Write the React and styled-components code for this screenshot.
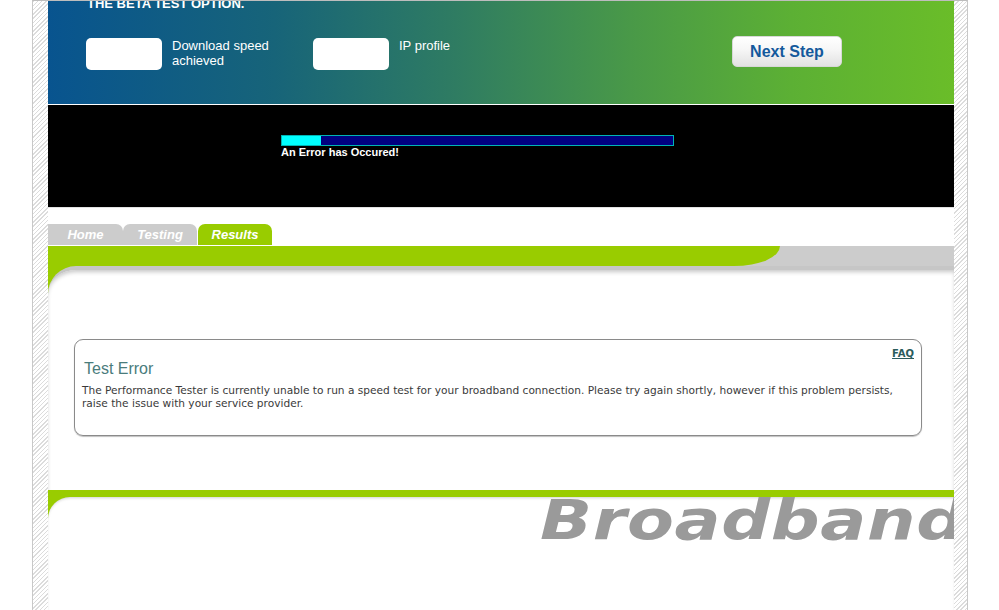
import React from 'react';
import styled, { createGlobalStyle } from 'styled-components';

const GlobalStyle = createGlobalStyle`
  html, body {
    margin: 0;
    padding: 0;
    background: #fff;
  }
  body {
    font-family: 'Liberation Sans', Arial, sans-serif;
  }
`;

const hatch = `repeating-linear-gradient(
  135deg,
  #dcdcdc 0px,
  #dcdcdc 1px,
  #ffffff 1px,
  #ffffff 3px
)`;

const Frame = styled.div`
  box-sizing: border-box;
  width: 936px;
  min-height: 610px;
  margin-left: 32px;
  padding: 0 13px 0 15px;
  border-top: 1px solid #bdbdbd;
  border-left: 1px solid #c8c8c8;
  border-right: 1px solid #c8c8c8;
  background: ${hatch};
`;

const Column = styled.div`
  width: 906px;
  background: #fff;
  overflow: hidden;
`;

const Header = styled.header`
  height: 103px;
  padding-left: 38px;
  overflow: hidden;
  background: linear-gradient(
    90deg,
    #08548f 0%,
    #176479 25%,
    #2f7c62 45%,
    #4a9a47 65%,
    #5cb034 82%,
    #6abd29 100%
  );
`;

const BetaTitle = styled.h2`
  margin: -5px 0 0 1px;
  font-size: 13px;
  line-height: 16px;
  font-weight: bold;
  color: #fff;
  text-transform: uppercase;
`;

const ResultRow = styled.div`
  display: flex;
  align-items: flex-start;
  margin-top: 26px;
`;

const Field = styled.div`
  display: flex;
  align-items: flex-start;
  gap: 10px;
  width: ${({ $width }) => $width}px;
  flex-shrink: 0;
`;

const ValueBox = styled.div`
  width: 76px;
  height: 32px;
  border-radius: 5px;
  background: #fff;
  flex-shrink: 0;
`;

const FieldLabel = styled.span`
  font-size: 13px;
  line-height: 15px;
  color: #fff;
`;

const NextButton = styled.button`
  box-sizing: border-box;
  width: 110px;
  height: 31px;
  margin-top: -2px;
  border: 1px solid #d8d8d8;
  border-radius: 5px;
  background: linear-gradient(180deg, #ffffff 0%, #f6f6f6 45%, #e2e2e2 100%);
  font-family: 'Liberation Sans', Arial, sans-serif;
  font-size: 16px;
  font-weight: bold;
  color: #14599c;
  cursor: pointer;
`;

const TestPanel = styled.section`
  box-sizing: border-box;
  height: 104px;
  padding: 30px 0 0 233px;
  border-top: 1px solid #fff;
  border-bottom: 1px solid #e2e2e2;
  background: #000;
`;

const Progress = styled.div`
  box-sizing: border-box;
  width: 393px;
  height: 11px;
  border: 1px solid #00b4b4;
  background: #000080;
`;

const ProgressFill = styled.div`
  height: 100%;
  background: #00ffff;
`;

const StatusText = styled.div`
  font-size: 11px;
  line-height: 13px;
  font-weight: bold;
  color: #fff;
`;

const TabBar = styled.nav`
  display: flex;
  padding-top: 16px;
  margin-bottom: 1px;
`;

const Tab = styled.div`
  width: ${({ $width }) => $width}px;
  height: 21px;
  margin-left: ${({ $gap }) => $gap || 0}px;
  border-radius: ${({ $first }) => ($first ? '0 7px 0 0' : '7px 7px 0 0')};
  background: ${({ $active }) => ($active ? '#99cc00' : '#cccccc')};
  color: #fff;
  font-size: 13px;
  font-weight: bold;
  font-style: italic;
  line-height: 22px;
  text-align: center;
`;

const Strip = styled.div`
  height: 20px;
  background: #cccccc;
`;

const StripFill = styled.div`
  width: 732px;
  height: 100%;
  background: #99cc00;
  border-bottom-right-radius: 46px 20px;
`;

const Corner = styled.div`
  background: #99cc00;
`;

const ContentPanel = styled.main`
  padding: 69px 32px 54px 26px;
  border-top: 4px solid #c6c6c6;
  border-top-left-radius: 28px;
  background: #fff;
  box-shadow: inset 0 3px 4px -1px rgba(0, 0, 0, 0.22);
`;

const ErrorCard = styled.div`
  padding: 8px 7px 25px 7px;
  border: 1px solid #8a8a8a;
  border-radius: 9px;
  box-shadow: 0 1px 1px rgba(0, 0, 0, 0.25);
`;

const FaqRow = styled.div`
  display: flex;
  justify-content: flex-end;
`;

const FaqLink = styled.a`
  font-family: 'DejaVu Sans', Verdana, sans-serif;
  font-size: 10px;
  line-height: 12px;
  font-weight: bold;
  color: #2b5c5c;
  text-decoration: underline;
`;

const CardTitle = styled.h3`
  margin: -1px 0 0 2px;
  font-size: 16px;
  line-height: 19px;
  font-weight: normal;
  color: #4a7c7c;
`;

const CardText = styled.p`
  margin: 6px 0 0;
  font-family: 'DejaVu Sans', Verdana, sans-serif;
  font-size: 10.6px;
  line-height: 13px;
  color: #3a3a3a;
`;

const Footer = styled.footer`
  padding-top: 7px;
  background: #99cc00;
`;

const FooterPanel = styled.div`
  min-height: 130px;
  padding-left: 492px;
  border-top-left-radius: 22px;
  background: #fff;
  box-shadow: inset 0 2px 3px -1px rgba(0, 0, 0, 0.18);
  overflow: hidden;
`;

/* wide slanted word mark, stretched horizontally */
const Brand = styled.div`
  margin-top: -5px;
  font-family: 'DejaVu Sans', Verdana, sans-serif;
  font-size: 56px;
  line-height: 56px;
  font-weight: bold;
  font-style: italic;
  letter-spacing: 0.5px;
  color: #9a9a9a;
  white-space: nowrap;
  transform: scaleX(1.22);
  transform-origin: left center;
`;

const tabs = [
  { label: 'Home', width: 75 },
  { label: 'Testing', width: 74 },
  { label: 'Results', width: 74, active: true, gap: 1 },
];

const progress = 10;

export default function App() {
  return (
    <>
      <GlobalStyle />
      <Frame>
        <Column>
          <Header>
            <BetaTitle>The beta test option.</BetaTitle>
            <ResultRow>
              <Field $width={227}>
                <ValueBox />
                <FieldLabel>
                  Download speed
                  <br />
                  achieved
                </FieldLabel>
              </Field>
              <Field $width={419}>
                <ValueBox />
                <FieldLabel>IP profile</FieldLabel>
              </Field>
              <NextButton type="button">Next Step</NextButton>
            </ResultRow>
          </Header>

          <TestPanel>
            <Progress>
              <ProgressFill style={{ width: `${progress}%` }} />
            </Progress>
            <StatusText>An Error has Occured!</StatusText>
          </TestPanel>

          <TabBar>
            {tabs.map((t, i) => (
              <Tab
                key={t.label}
                $width={t.width}
                $active={t.active}
                $gap={t.gap}
                $first={i === 0}
              >
                {t.label}
              </Tab>
            ))}
          </TabBar>

          <Strip>
            <StripFill />
          </Strip>

          <Corner>
            <ContentPanel>
              <ErrorCard>
                <FaqRow>
                  <FaqLink href="#faq">FAQ</FaqLink>
                </FaqRow>
                <CardTitle>Test Error</CardTitle>
                <CardText>
                  The Performance Tester is currently unable to run a speed test
                  for your broadband connection. Please try again shortly,
                  however if this problem persists, raise the issue with your
                  service provider.
                </CardText>
              </ErrorCard>
            </ContentPanel>
          </Corner>

          <Footer>
            <FooterPanel>
              <Brand>Broadband</Brand>
            </FooterPanel>
          </Footer>
        </Column>
      </Frame>
    </>
  );
}
